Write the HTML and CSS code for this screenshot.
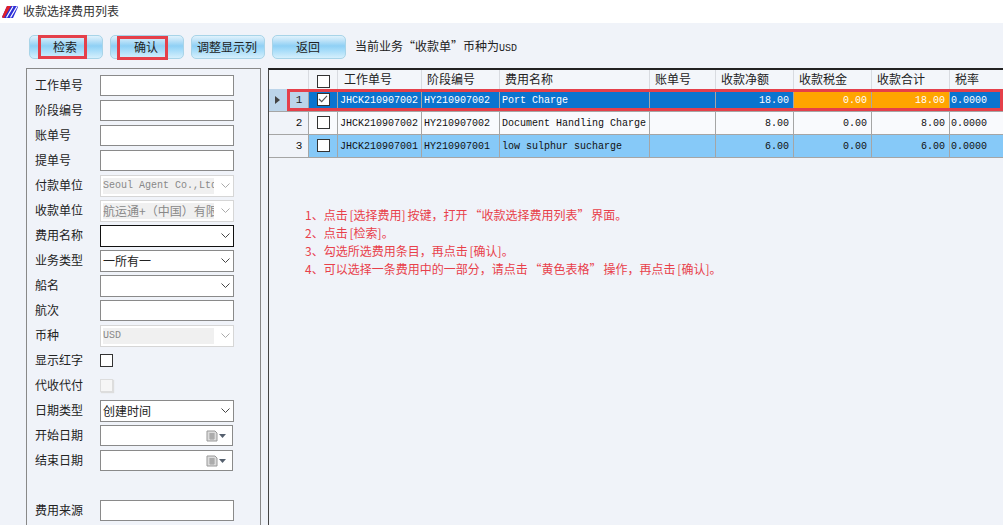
FILE: index.html
```html
<!DOCTYPE html>
<html lang="zh">
<head>
<meta charset="utf-8">
<title>收款选择费用列表</title>
<link rel="stylesheet" href="styles.css">
</head>
<body>
<header class="titlebar">
  <svg class="logo" width="16" height="14" viewBox="0 0 16 14"><path d="M5 1H15L16 2 11 13H1L0 12Z" fill="#2d2fd8"/><path d="M5 1H9L2 13H1L0 12Z" fill="#e0202a"/><path d="M4.500 12.500 11 1.500M8.500 12.500 15 1.500" stroke="#fff" stroke-width="1.200"/></svg>
  <span>收款选择费用列表</span>
</header>
<div class="toolbar">
  <button class="btn"><span class="mark mark-a"></span>检索</button>
  <button class="btn"><span class="mark mark-b"></span>确认</button>
  <button class="btn">调整显示列</button>
  <button class="btn">返回</button>
  <span class="note">当前业务“收款单”币种为<span class="mono">USD</span></span>
</div>
<main class="content">
  <aside class="panel">
    <div class="row"><label>工作单号</label><div class="field"></div></div>
    <div class="row"><label>阶段编号</label><div class="field"></div></div>
    <div class="row"><label>账单号</label><div class="field"></div></div>
    <div class="row"><label>提单号</label><div class="field"></div></div>
    <div class="row"><label>付款单位</label><div class="field combo off"><span class="val mono">Seoul Agent Co.,Ltd</span><svg class="chev" viewBox="0 0 9 5"><path d="M.5.5 4.500 4.500 8.500.5" fill="none" stroke="#aaa"/></svg></div></div>
    <div class="row"><label>收款单位</label><div class="field combo off"><span class="val">航运通+（中国）有限公司</span><svg class="chev" viewBox="0 0 9 5"><path d="M.5.5 4.500 4.500 8.500.5" fill="none" stroke="#aaa"/></svg></div></div>
    <div class="row"><label>费用名称</label><div class="field combo focus"><span class="val"></span><svg class="chev" viewBox="0 0 9 5"><path d="M.5.5 4.500 4.500 8.500.5" fill="none" stroke="#444"/></svg></div></div>
    <div class="row"><label>业务类型</label><div class="field combo"><span class="val">一所有一</span><svg class="chev" viewBox="0 0 9 5"><path d="M.5.5 4.500 4.500 8.500.5" fill="none" stroke="#444"/></svg></div></div>
    <div class="row"><label>船名</label><div class="field combo"><span class="val"></span><svg class="chev" viewBox="0 0 9 5"><path d="M.5.5 4.500 4.500 8.500.5" fill="none" stroke="#444"/></svg></div></div>
    <div class="row"><label>航次</label><div class="field"></div></div>
    <div class="row"><label>币种</label><div class="field combo off"><span class="val mono">USD</span><svg class="chev" viewBox="0 0 9 5"><path d="M.5.5 4.500 4.500 8.500.5" fill="none" stroke="#aaa"/></svg></div></div>
    <div class="row"><label>显示红字</label><span class="check"></span></div>
    <div class="row"><label>代收代付</label><span class="check check-off"></span></div>
    <div class="row"><label>日期类型</label><div class="field combo"><span class="val">创建时间</span><svg class="chev" viewBox="0 0 9 5"><path d="M.5.5 4.500 4.500 8.500.5" fill="none" stroke="#444"/></svg></div></div>
    <div class="row"><label>开始日期</label><div class="field date"><svg class="cal" viewBox="0 0 20 12"><path d="M1 1h8l2 2v8H1z" fill="#dcdcdc" stroke="#999"/><path d="M3 4h6M3 6h6M3 8h6M5 3v7M7 3v7" stroke="#8a8a8a" stroke-width=".7"/><path d="M13 4h7l-3.500 4z" fill="#55606e"/></svg></div></div>
    <div class="row"><label>结束日期</label><div class="field date"><svg class="cal" viewBox="0 0 20 12"><path d="M1 1h8l2 2v8H1z" fill="#dcdcdc" stroke="#999"/><path d="M3 4h6M3 6h6M3 8h6M5 3v7M7 3v7" stroke="#8a8a8a" stroke-width=".7"/><path d="M13 4h7l-3.500 4z" fill="#55606e"/></svg></div></div>
    <div class="row row-gap"><label>费用来源</label><div class="field"></div></div>
  </aside>
  <section class="gridwrap">
    <table class="grid">
      <colgroup><col class="c-ind"><col class="c-num"><col class="c-chk"><col class="c-a"><col class="c-b"><col class="c-c"><col class="c-d"><col class="c-e"><col class="c-e"><col class="c-e"><col class="c-f"></colgroup>
      <thead>
        <tr><th colspan="2"></th><th class="ck"><span class="check"></span></th><th class="ha">工作单号</th><th>阶段编号</th><th>费用名称</th><th>账单号</th><th>收款净额</th><th>收款税金</th><th>收款合计</th><th>税率</th></tr>
      </thead>
      <tbody>
        <tr class="sel"><td class="ind"><i class="arrow"></i></td><td class="num">1</td><td class="ck"><span class="check check-on"><svg viewBox="0 0 11 9"><path d="M1 4.500 4 7.500 10 1" fill="none" stroke="#555" stroke-width="1.300"/></svg></span></td><td class="code">JHCK210907002</td><td>HY210907002</td><td>Port Charge</td><td></td><td class="r">18.00</td><td class="r amber">0.00</td><td class="r amber">18.00</td><td class="rate">0.0000</td></tr>
        <tr class="plain"><td class="ind"></td><td class="num">2</td><td class="ck"><span class="check"></span></td><td class="code">JHCK210907002</td><td>HY210907002</td><td>Document Handling Charge</td><td></td><td class="r">8.00</td><td class="r">0.00</td><td class="r">8.00</td><td class="rate">0.0000</td></tr>
        <tr class="alt"><td class="ind"></td><td class="num">3</td><td class="ck"><span class="check"></span></td><td class="code">JHCK210907001</td><td>HY210907001</td><td>low sulphur sucharge</td><td></td><td class="r">6.00</td><td class="r">0.00</td><td class="r">6.00</td><td class="rate">0.0000</td></tr>
      </tbody>
    </table>
    <span class="rowmark"></span>
    <ol class="steps">
      <li>1、点击 [选择费用] 按键，打开 “收款选择费用列表” 界面。</li>
      <li>2、点击 [检索]。</li>
      <li>3、勾选所选费用条目，再点击 [确认]。</li>
      <li>4、可以选择一条费用中的一部分，请点击 “黄色表格” 操作，再点击 [确认]。</li>
    </ol>
  </section>
</main>
</body>
</html>
```
FILE: styles.css
```css
* { box-sizing: border-box; }
html, body { margin: 0; height: 525px; overflow: hidden; }
body {
  width: 1003px;
  background: #f0f3f9;
  color: #222;
  font: 12px/16px "Noto Sans CJK SC", "Liberation Sans", sans-serif;
}
.mono { font-family: "Liberation Mono", "Noto Sans CJK SC", monospace; font-size: 10px; }
.titlebar {
  height: 23px;
  background: #fff;
  display: flex;
  align-items: center;
  gap: 5px;
  padding: 0 0 0 2px;
  color: #333;
}
.titlebar span { margin-bottom: 2px; }
.toolbar {
  height: 45px;
  padding: 12px 0 0 29px;
  display: flex;
  align-items: flex-start;
  gap: 7px;
}
.btn {
  position: relative;
  width: 74px;
  height: 24px;
  padding: 0 2px 0 0;
  border: 1px solid #a8d4e8;
  border-radius: 5px;
  background: linear-gradient(#e0f2fc 0, #bfe3f8 20%, #8fd0f5 45%, #a6dcf9 65%, #d5effc 100%);
  color: #222;
  font: inherit;
}
.mark { position: absolute; top: -1px; border: 3px solid #e5404a; height: 24px; }
.mark-a { left: 8px; width: 49px; }
.mark-b { left: 6px; width: 51px; top: 0; }
.note { margin: 2px 0 0 2px; line-height: 18px; color: #222; }
.content { display: flex; gap: 7px; padding-left: 26px; height: 457px; }
.panel {
  width: 235px;
  border: 1px solid #888;
  border-bottom: 0;
  padding: 4px 26px 0 8px;
  overflow: hidden;
}
.row { height: 25px; display: flex; align-items: center; }
.row-gap { margin-top: 25px; }
.row label { width: 65px; flex: none; color: #222; padding-bottom: 2px; }
.field {
  width: 134px;
  height: 21px;
  flex: none;
  background: #fff;
  border: 1px solid #8a8a8a;
  display: flex;
  align-items: center;
}
.combo { height: 22px; padding: 0 3px 0 2px; overflow: hidden; }
.combo .val { flex: 1; min-width: 0; white-space: nowrap; overflow: hidden; height: 16px; line-height: 15px; }
.chev { width: 9px; height: 5px; flex: none; margin-left: 7px; }
.focus { border-color: #111; }
.off { border-color: #d6d6d6; background: #fff; color: #888; }
.off .val { background: #f0f0f0; height: 16px; }
.date { width: 133px; justify-content: flex-end; padding-right: 6px; }
.cal { width: 20px; height: 12px; }
.check {
  display: inline-flex;
  align-items: center;
  justify-content: center;
  width: 13px;
  height: 13px;
  background: #fff;
  border: 1px solid #333;
  vertical-align: middle;
}
.check-off { border-color: #ddd; background: #f6f6f6; box-shadow: 1px 1px 1px #ddd; }
.check svg { width: 10px; height: 8px; }
.gridwrap {
  position: relative;
  flex: 1;
  border-left: 1px solid #444;
  border-top: 2px solid #222;
  height: 457px;
}
.grid {
  width: 734px;
  table-layout: fixed;
  border-collapse: separate;
  border-spacing: 0;
  font-family: "Liberation Mono", "Noto Sans CJK SC", monospace;
  font-size: 10px;
}
.c-ind { width: 20px; } .c-num { width: 20px; } .c-chk { width: 29px; }
.c-a { width: 84px; } .c-b { width: 78px; } .c-c { width: 150px; }
.c-d { width: 66px; } .c-e { width: 78px; } .c-f { width: 53px; }
th, td { padding: 0 2px; white-space: nowrap; overflow: hidden; border-right: 1px solid #a5a5a5; }
th:last-child, td:last-child { border-right: 0; }
thead tr { height: 19px; background: #f3f6fa; }
th {
  font: 400 12px/16px "Noto Sans CJK SC", sans-serif;
  color: #222;
  text-align: left;
  padding: 0 0 2px 5px;
  border-right-color: #d8dbe0;
}
th.ha { padding-left: 6px; }
tbody tr { height: 23px; }
tbody td { border-bottom: 1px solid #a5a5a5; padding-top: 1px; }
td.ind { padding: 0 0 0 6px; background: #bcd5ea; border-right: 0; }
tr.plain td.ind, tr.alt td.ind { background: #f0f3f9; }
td.num { text-align: center; background: #bcd5ea; color: #222; font-size: 11px; padding: 0 0 0 1px; }
tr.plain td.num, tr.alt td.num { background: #f0f3f9; }
.ck { text-align: center; padding: 0; }
td.code { padding-left: 2px; }
td.r { text-align: right; padding-right: 4px; }
td.rate { padding-left: 1px; }
.sel td { background: #0a74cf; color: #fff; }
.sel td.ind, .sel td.num { color: #222; background: #bcd5ea; }
.sel td.amber { background: #ffa500; }
.plain td { background: #f9fafd; color: #111; }
.alt td { background: #86c9f8; color: #111; }
.arrow { display: block; width: 0; height: 0; border: 4px solid transparent; border-left: 5px solid #444; border-right: 0; }
.rowmark {
  position: absolute;
  left: 18px;
  top: 19px;
  width: 716px;
  height: 22px;
  border: 3px solid #e5404a;
  pointer-events: none;
}
.steps {
  list-style: none;
  margin: 0;
  padding: 0;
  position: absolute;
  left: 36px;
  top: 136px;
  color: #e8404a;
  line-height: 18px;
  word-spacing: -.8px;
}
```
